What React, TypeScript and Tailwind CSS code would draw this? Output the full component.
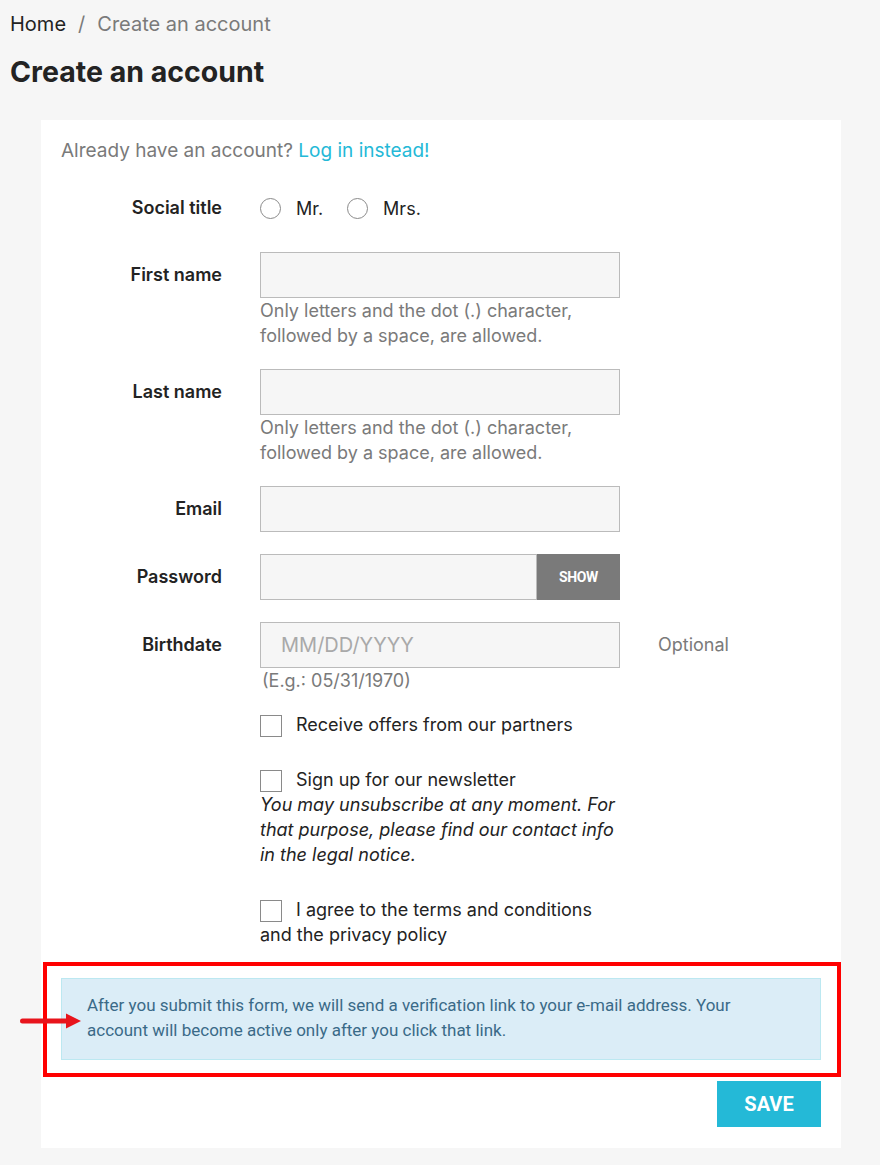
import React from 'react';

const LABEL = 'text-right text-[18px] font-semibold text-[#232323] leading-[46px]';
const INPUT = 'h-[46px] w-[360px] border border-[#bbbbbb] bg-[#f6f6f6]';
const HELP = 'text-[18px] leading-[25px] text-[#7a7a7a]';

function Row({ label, className, children }: { label: string; className?: string; children: React.ReactNode }) {
  return (
    <div className={`grid grid-cols-[161px_360px_1fr] gap-x-[38px] ${className ?? ''}`}>
      <div className={LABEL}>{label}</div>
      {children}
    </div>
  );
}

function Radio({ label }: { label: string }) {
  return (
    <label className="flex items-center">
      <span className="h-[21px] w-[21px] rounded-full border border-[#8a8a8a] bg-white" />
      <span className="ml-[15px] text-[18px] text-[#232323]">{label}</span>
    </label>
  );
}

function Box() {
  return <span className="mt-[3px] h-[22px] w-[22px] shrink-0 border border-[#8a8a8a] bg-white" />;
}

export default function App() {
  return (
    <div className="min-h-screen bg-[#f6f6f6] px-[10px] pt-[11px] pb-[17px] font-['Inter',sans-serif]">
      {/* Breadcrumb */}
      <nav className="text-[20px] leading-[26px]">
        <span className="text-[#232323]">Home</span>
        <span className="mx-[12px] text-[#7a7a7a]">/</span>
        <span className="text-[#7a7a7a]">Create an account</span>
      </nav>
      <h1 className="mt-[18px] text-[28.5px] font-bold leading-[34px] text-[#232323]">Create an account</h1>

      {/* Card */}
      <div className="mt-[31px] ml-[31px] w-[800px] bg-white px-[20px] pt-[18px] pb-[21px]">
        <p className="text-[19px] leading-[26px] text-[#7a7a7a]">
          Already have an account? <a className="text-[#24b9d7]">Log in instead!</a>
        </p>

        <Row label="Social title" className="mt-[21px]">
          <div className="flex items-center gap-[24px]">
            <Radio label="Mr." />
            <Radio label="Mrs." />
          </div>
        </Row>

        <Row label="First name" className="mt-[21px]">
          <div>
            <div className={INPUT} />
            <p className={HELP}>Only letters and the dot (.) character,<br />followed by a space, are allowed.</p>
          </div>
        </Row>

        <Row label="Last name" className="mt-[21px]">
          <div>
            <div className={INPUT} />
            <p className={HELP}>Only letters and the dot (.) character,<br />followed by a space, are allowed.</p>
          </div>
        </Row>

        <Row label="Email" className="mt-[21px]">
          <div className={INPUT} />
        </Row>

        <Row label="Password" className="mt-[22px]">
          <div className="flex h-[46px] w-[360px]">
            <div className="flex-1 border border-[#bbbbbb] bg-[#f6f6f6]" />
            <button className="w-[83px] bg-[#7a7a7a] font-['Roboto',sans-serif] text-[14px] font-bold tracking-tight text-white">
              SHOW
            </button>
          </div>
        </Row>

        <Row label="Birthdate" className="mt-[22px]">
          <div>
            <div className={`${INPUT} flex items-center pl-[20px] text-[20px] text-[#a9a9a9]`}>MM/DD/YYYY</div>
            <p className="pl-[2px] text-[18px] leading-[25px] text-[#7a7a7a]">(E.g.: 05/31/1970)</p>
          </div>
          <div className="text-[18px] leading-[46px] text-[#7a7a7a]">Optional</div>
        </Row>

        {/* Checkboxes */}
        <div className="ml-[199px] w-[360px] text-[18px] leading-[25px] text-[#232323]">
          <label className="mt-[19px] flex">
            <Box />
            <span className="ml-[14px]">Receive offers from our partners</span>
          </label>

          <div className="mt-[30px]">
            <label className="flex">
              <Box />
              <span className="ml-[14px]">Sign up for our newsletter</span>
            </label>
            <p className="italic">
              You may unsubscribe at any moment. For that purpose, please find our contact info in the legal notice.
            </p>
          </div>

          <div className="mt-[30px]">
            <label className="flex">
              <Box />
              <span className="ml-[14px]">I agree to the terms and conditions</span>
            </label>
            <p>and the privacy policy</p>
          </div>
        </div>

        {/* Highlighted notice */}
        <div className="relative mt-[15px] -ml-[18px] -mr-[20px] border-4 border-[#ff0000] pt-[12px] pr-[16px] pb-[13px] pl-[14px]">
          <div className="border border-[#bce8f1] bg-[#dbedf7] px-[25px] pt-[14px] pb-[16px] font-['Roboto',sans-serif] text-[17px] leading-[25px] text-[#3a6a88]">
            After you submit this form, we will send a verification link to your e-mail address. Your account will become active only after you click that link.
          </div>
          <svg
            className="absolute top-[46px] -left-[27px]"
            width="62"
            height="18"
            viewBox="0 0 62 18"
          >
            <rect x="0" y="6.5" width="50" height="5" rx="2.5" fill="#e8141c" />
            <polygon points="46,1.5 61,9 46,16.5" fill="#e8141c" />
          </svg>
        </div>

        <div className="mt-[4px] flex justify-end">
          <button className="h-[46px] w-[104px] bg-[#24b9d7] font-['Roboto',sans-serif] text-[20px] font-bold text-white">
            SAVE
          </button>
        </div>
      </div>
    </div>
  );
}
